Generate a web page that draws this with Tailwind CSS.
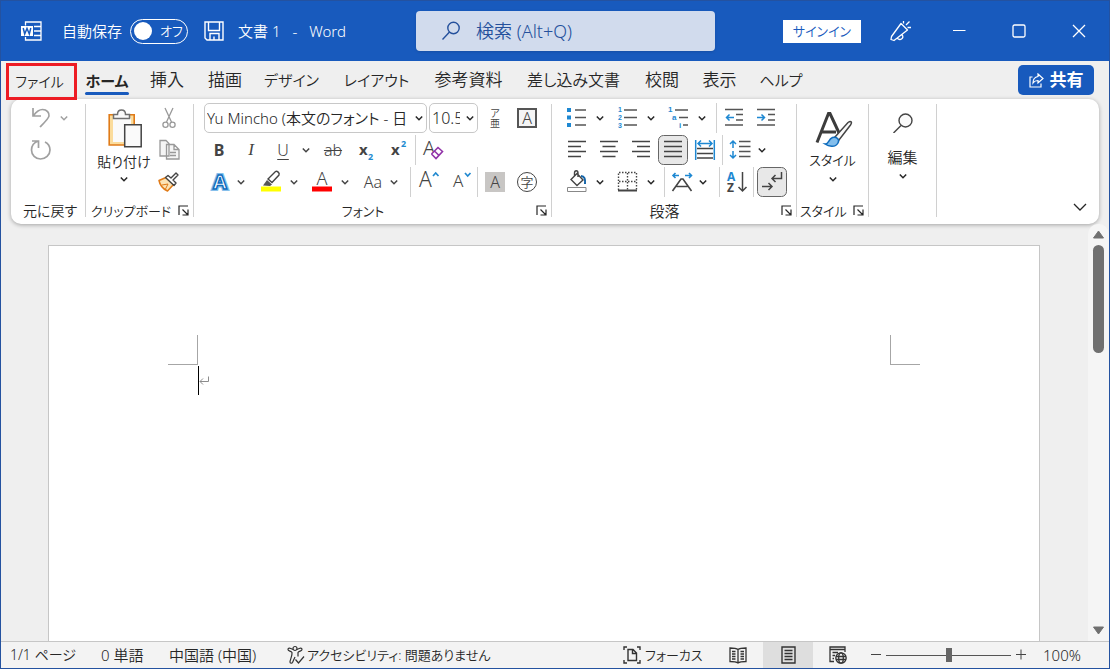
<!DOCTYPE html>
<html lang="ja">
<head>
<meta charset="utf-8">
<title>文書 1 - Word</title>
<script src="https://cdn.jsdelivr.net/npm/@tailwindcss/browser@4"></script>
</head>
<body class="flex h-screen flex-col overflow-hidden border border-[#2452a0] bg-[#efefef] font-['Noto_Sans','Noto_Sans_CJK_JP',sans-serif] text-[15px] leading-5 font-[350] text-[#262626] [font-feature-settings:'palt']">
<svg class="hidden">
  <symbol id="chev" viewBox="0 0 14 14"><path d="M3.800 5.500 7 8.700l3.200-3.200" fill="none" stroke="currentColor" stroke-width="1.500"/></symbol>
  <symbol id="launch" viewBox="0 0 12 12"><path d="M1 10V1h9M4.500 4.500l5 5M10 4.500V10H4.500" fill="none" stroke="currentColor" stroke-width="1.200"/></symbol>
</svg>

<!-- Title bar -->
<header class="flex h-[60px] shrink-0 items-center bg-[#185abd] text-white">
  <div class="flex w-[415px] shrink-0 items-center pl-5">
    <svg class="h-5 w-[21px]" viewBox="0 0 21 20" fill="none" stroke="#fff" stroke-width="1.300"><path d="M4.500 4.500V1h15.500v18H4.500v-3M13 5.500h7M13 10h7M13 14.500h7"/><path d="M0 5h12v10H0z" fill="#fff" stroke="none"/><path d="m2.200 7 1.500 6L6 7.500 8.300 13l1.500-6" stroke="#185abd" stroke-width="1.500"/></svg>
    <span class="ml-5 w-[60px] whitespace-nowrap" id="autosave">自動保存</span>
    <button role="switch" aria-checked="false" aria-labelledby="autosave" class="ml-2 flex h-[25px] w-[58px] items-center rounded-full border border-white pl-[3px]"><span class="size-[18px] rounded-full bg-white"></span><span class="ml-2 text-[13px]">オフ</span></button>
    <button aria-label="上書き保存" class="ml-4"><svg class="size-5" viewBox="0 0 20 20" fill="none" stroke="#fff" stroke-width="1.400"><path d="M1 1h18v18H3l-2-2zM4.500 1v8.500h11V1M6 19v-6.500h9V19M10 15.500V19"/></svg></button>
    <h1 class="ml-3.5 flex gap-3 whitespace-nowrap"><span>文書 1</span><span>-</span><span>Word</span></h1>
  </div>
  <label class="flex h-10 max-w-[299px] flex-1 items-center rounded-[4px] bg-[#d1dbed] pl-[26px] shadow">
    <svg class="size-5 shrink-0" viewBox="0 0 20 20" fill="none" stroke="#24509c" stroke-width="1.400"><circle cx="11.500" cy="7" r="5.700"/><path d="m7.500 11-7 7.500"/></svg>
    <input type="search" aria-label="検索" placeholder="検索 (Alt+Q)" class="ml-3.5 min-w-0 flex-1 bg-transparent text-[18px] outline-none placeholder:text-[#24509c]">
  </label>
  <div class="ml-auto flex items-center">
    <button class="h-[23px] w-[78px] bg-white text-[13px] leading-5 whitespace-nowrap text-[#185abd]">サインイン</button>
    <button aria-label="近日公開の機能" class="ml-7"><svg class="size-[22px]" viewBox="0 0 22 22" fill="none" stroke="#fff" stroke-width="1.300" stroke-linejoin="round"><path d="m12 3.500 6.500 6.500L5 20.500l-3-1 .5-3zM8 17.500c1 2 3 2.500 4.500 1.500s1.500-3 .5-4.500M14.500 1v2.500M20.500 1.500 17 5M18.500 7.500H22"/></svg></button>
    <button aria-label="最小化" class="ml-[18px] flex h-[60px] w-[60px] items-center justify-center"><svg class="size-3.5" viewBox="0 0 14 14" stroke="#fff"><path d="M1 6.500h12.500"/></svg></button>
    <button aria-label="最大化" class="flex h-[60px] w-[60px] items-center justify-center"><svg class="size-3.5" viewBox="0 0 14 14" fill="none" stroke="#fff" stroke-width="1.300"><rect x="1" y="1" width="12" height="12" rx="1.500"/></svg></button>
    <button aria-label="閉じる" class="flex h-[60px] w-[60px] items-center justify-center"><svg class="size-3.5" viewBox="0 0 14 14" fill="none" stroke="#fff" stroke-width="1.300"><path d="m1 1 12 12M13 1 1 13"/></svg></button>
  </div>
</header>

<!-- Tabs -->
<nav class="flex h-[38px] shrink-0 pl-[5px] text-[17px] whitespace-nowrap">
  <button class="relative z-10 mt-0.5 flex h-[37px] w-[71px] shrink-0 items-center justify-center border-3 border-[#ed1c24] pr-1 text-sm">ファイル</button>
  <button class="flex w-[60px] shrink-0 flex-col items-center pt-2 text-[15px] font-bold"><span class="h-[23px] leading-6">ホーム</span><span class="h-[3px] w-11 rounded-full bg-[#185abd]"></span></button>
  <button class="w-[60px] shrink-0">挿入</button>
  <button class="w-[56px] shrink-0">描画</button>
  <button class="flex w-[77px] shrink-0 items-center justify-center text-[15px]">デザイン</button>
  <button class="flex w-[93px] shrink-0 items-center justify-center text-[15px]">レイアウト</button>
  <button class="w-[91px] shrink-0">参考資料</button>
  <button class="flex w-[119px] shrink-0 items-center justify-center text-base">差し込み文書</button>
  <button class="w-[58px] shrink-0">校閲</button>
  <button class="w-[57px] shrink-0">表示</button>
  <button class="w-[66px] shrink-0 text-[15px]">ヘルプ</button>
  <button class="mt-1 mr-[15px] ml-auto flex h-[30px] w-[76px] items-center justify-center gap-1.5 rounded-[5px] bg-[#185abd] font-bold text-white"><svg class="size-[15px]" viewBox="0 0 15 15" fill="none" stroke="#fff" stroke-width="1.200"><path d="M3.500 4H1v10h11V10.500M9 1l5 4.500L9 10V7.500C6.500 7.500 5 8.500 4 10c0-4 2-6 5-6.500z"/></svg>共有</button>
</nav>

<!-- Ribbon -->
<section aria-label="リボン" class="mr-[10px] ml-[10px] flex shrink-0 rounded-[10px] bg-white shadow-[0_1px_4px_rgba(0,0,0,0.32)]">
  <div class="flex w-[74px] shrink-0 flex-col pt-[3px]">
    <div class="flex h-24 flex-col pl-3.5 text-[#a0a0a0]">
      <div class="flex items-center"><button aria-label="元に戻す"><svg class="size-8" viewBox="0 0 32 32" fill="none" stroke="currentColor" stroke-width="1.700"><path d="M8 6v8h8M8.500 13.500c3-4 6-6 9-6 4.500 0 7 3.500 6.500 6.500-.3 2.500-4 6-9 11"/></svg></button><button aria-label="元に戻す一覧"><svg class="size-3.5"><use href="#chev"/></svg></button></div>
      <button aria-label="やり直し" class="self-start"><svg class="size-8" viewBox="0 0 32 32" fill="none" stroke="currentColor" stroke-width="1.700"><path d="M7 7h6.500v7M13.500 7C9 8.500 6.500 12 6.500 16c0 5 4 9 9 9s9.500-4 9.500-9c0-3.500-2-6.500-5-8"/></svg></button>
    </div>
    <div class="flex h-[26px] items-center justify-center pl-1 text-sm whitespace-nowrap">元に戻す</div>
  </div>
  <div class="mt-[5px] mb-[7px] w-px bg-[#d0d0d0]"></div>

  <div class="flex w-[107px] shrink-0 flex-col pt-[3px]">
    <div class="flex h-24">
      <button class="ml-[9px] flex w-[58px] flex-col items-center pt-1.5"><svg class="h-10 w-9" viewBox="0 0 36 40" fill="none"><path d="M3.200 6.800h25V37h-25z" fill="#fbdc9c" stroke="#e07b18" stroke-width="1.600"/><path d="M7 10h18v24H7z" fill="#fafafa"/><path d="M7.500 10.500V6.500h4C11.500 4 13 2 15.500 2s4 2 4 4.500h4v4z" fill="#fafafa" stroke="#707070" stroke-width="1.500"/><path d="M18.700 16.700h16.500v22H18.700z" fill="#fafafa" stroke="#444" stroke-width="1.500"/></svg><span class="mt-1 text-sm leading-5 whitespace-nowrap">貼り付け</span><svg class="size-3.5 shrink-0"><use href="#chev"/></svg></button>
      <div class="flex w-8 flex-col">
        <button aria-label="切り取り"><svg class="size-8" viewBox="0 0 32 32" fill="none" stroke="#999" stroke-width="1.300"><path d="m12 6 6.500 14M20 6l-6.500 14"/><circle cx="12.500" cy="22.700" r="2.600"/><circle cx="19.500" cy="22.700" r="2.600"/></svg></button>
        <button aria-label="コピー"><svg class="size-8" viewBox="0 0 32 32" fill="#f5f5f5" stroke="#999" stroke-width="1.300"><path d="M7 6.500h6l3 3V22H7zM13.500 10.500h7.500l5 5V25H13.500zM21 10.500v5h5M17 18.500h6M17 21.500h6"/></svg></button>
        <button aria-label="書式のコピー/貼り付け"><svg class="size-8" viewBox="0 0 32 32" fill="none" stroke-linejoin="round"><path d="m13 11.500-7 3c1 5 4 8.500 8.500 10.500l6-6.500z" fill="#fce3b4" stroke="#e07b18" stroke-width="1.500"/><path d="m9 19 6-1-2.500 5" stroke="#e07b18"/><path d="m12.500 11.500 2.500-2 3 2.500 5-5 2 2-5 5 3 3-2 2.500z" fill="#fff" stroke="#444" stroke-width="1.400"/></svg></button>
      </div>
    </div>
    <div class="flex h-[26px] items-center justify-between pr-[3px] pl-[5px] text-[13px] whitespace-nowrap"><span>クリップボード</span><button aria-label="クリップボード 詳細"><svg class="size-3"><use href="#launch"/></svg></button></div>
  </div>
  <div class="mt-[5px] mb-[7px] w-px bg-[#d0d0d0]"></div>

  <!-- Font group -->
  <div class="flex w-[357px] shrink-0 flex-col pt-[3px]">
    <div class="flex h-8 items-center gap-0.5 pl-[10px]">
      <div class="flex h-[30px] w-[223px] items-center rounded-[5px] border border-[#c8c8c8]"><input aria-label="フォント" value="Yu Mincho (本文のフォント - 日" class="ml-0.5 w-[202px] min-w-0 bg-transparent text-[15px] outline-none"><button aria-label="フォント一覧" class="ml-auto"><svg class="size-3.5"><use href="#chev"/></svg></button></div>
      <div class="flex h-[30px] w-[49px] items-center rounded-[5px] border border-[#c8c8c8]"><input aria-label="フォント サイズ" value="10.5" class="ml-0.5 w-7 min-w-0 bg-transparent text-base outline-none"><button aria-label="サイズ一覧" class="ml-auto"><svg class="size-3.5"><use href="#chev"/></svg></button></div>
      <div class="-ml-px flex">
        <button aria-label="ルビ" class="flex w-8 flex-col items-center justify-center text-[10px] leading-[10px] text-[#444]"><span>ア</span><span>亜</span></button>
        <button aria-label="囲み線" class="flex w-8 justify-center"><span class="flex size-5 items-center justify-center border-2 border-[#555] bg-[#f5f5f5] text-base text-[#444]">A</span></button>
      </div>
    </div>
    <div class="flex h-8 items-center pl-[9px] text-[#444]">
      <button class="w-8 text-base font-bold">B</button>
      <button class="w-8 font-['Liberation_Serif',serif] text-[17px] italic">I</button>
      <button class="w-8 text-base underline underline-offset-3">U</button>
      <button aria-label="下線の種類" class="w-3.5"><svg class="size-3.5"><use href="#chev"/></svg></button>
      <button class="ml-1 w-8 text-base line-through">ab</button>
      <button aria-label="下付き" class="w-8"><svg class="size-8" viewBox="0 0 32 32"><text x="10" y="21" font-size="15" font-weight="bold" fill="#444">x</text><text x="19" y="26" font-size="9" font-weight="bold" fill="#2189d0">2</text></svg></button>
      <button aria-label="上付き" class="w-8"><svg class="size-8" viewBox="0 0 32 32"><text x="10" y="21" font-size="15" font-weight="bold" fill="#444">x</text><text x="20" y="13" font-size="9" font-weight="bold" fill="#2189d0">2</text></svg></button>
      <div class="ml-0.5 h-[30px] w-px bg-[#d0d0d0]"></div>
      <button aria-label="書式のクリア"><svg class="size-8" viewBox="0 0 32 32"><text x="7" y="21" font-size="20" fill="#444">A</text><path d="m15.500 20 6.500-6.500 4.500 4-6.500 7-4.500-4.500m3-3 4.500 4.500" fill="#fff" stroke="#9133a8" stroke-width="1.600"/></svg></button>
    </div>
    <div class="flex h-8 items-center pl-[10px] text-[#444]">
      <div class="mr-[5px] flex items-center"><button aria-label="文字の効果"><svg class="size-8" viewBox="0 0 32 32"><text x="16" y="23" text-anchor="middle" font-size="20" font-weight="bold" fill="#fff" stroke="#86bfeb" stroke-width="4" paint-order="stroke">A</text><text x="16" y="23" text-anchor="middle" font-size="20" font-weight="bold" fill="#fff" stroke="#0f6cbd" stroke-width="1.500">A</text></svg></button><button aria-label="効果一覧" class="-ml-0.5 mr-0.5"><svg class="size-3.5"><use href="#chev"/></svg></button></div>
      <div class="mr-[5px] flex items-center"><button aria-label="蛍光ペン"><svg class="size-8" viewBox="0 0 32 32"><path d="M6 20.500h20v5H6z" fill="#ff0"/><path d="M8 19.500 12 14l5 4.500-2 1.500z" fill="#555"/><path d="m13 13 7.500-7.500c1.500-1 4.500 1.500 3.500 3.500L17 16.500z" fill="#fff" stroke="#444" stroke-width="1.400"/></svg></button><button aria-label="蛍光ペンの色"><svg class="size-3.5"><use href="#chev"/></svg></button></div>
      <div class="mr-[5px] flex items-center"><button aria-label="フォントの色"><svg class="size-8" viewBox="0 0 32 32"><text x="16" y="19" text-anchor="middle" font-size="18" fill="#444">A</text><path d="M6 20.500h20v5H6z" fill="red"/></svg></button><button aria-label="色一覧"><svg class="size-3.5"><use href="#chev"/></svg></button></div>
      <div class="flex items-center"><button class="w-8 text-base">Aa</button><button aria-label="文字種の変換" class="-ml-0.5 mr-px"><svg class="size-3.5"><use href="#chev"/></svg></button></div>
      <div class="mr-0.5 ml-2 h-[30px] w-px bg-[#d0d0d0]"></div>
      <button aria-label="フォント サイズの拡大"><svg class="size-8" viewBox="0 0 32 32"><text x="6" y="21" font-size="21" fill="#444">A</text><path d="m20 10 2.700-3 2.800 3" fill="none" stroke="#2189d0" stroke-width="1.700"/></svg></button>
      <button aria-label="フォント サイズの縮小"><svg class="size-8" viewBox="0 0 32 32"><text x="8" y="21" font-size="17" fill="#444">A</text><path d="m20 7 2.700 3 2.800-3" fill="none" stroke="#2189d0" stroke-width="1.700"/></svg></button>
      <div class="mr-px h-[30px] w-px bg-[#d0d0d0]"></div>
      <button aria-label="文字の網かけ" class="flex w-8 justify-center"><span class="flex size-5 items-center justify-center bg-[#c8c6c4] text-base">A</span></button>
      <button aria-label="囲い文字" class="flex w-8 justify-center"><span class="flex size-5 items-center justify-center rounded-full border border-[#444] text-[13px]">字</span></button>
    </div>
    <div class="grid h-[26px] grid-cols-[1fr_auto_1fr] items-center pr-[3px] text-[13px]"><span></span><span class="pr-4">フォント</span><button aria-label="フォント 詳細" class="justify-self-end"><svg class="size-3"><use href="#launch"/></svg></button></div>
  </div>
  <div class="mt-[5px] mb-[7px] w-px bg-[#d0d0d0]"></div>

  <!-- Paragraph group -->
  <div class="flex w-[244px] shrink-0 flex-col pt-[3px]">
    <div class="flex h-8 items-center pl-[9px]">
      <div class="mr-[5px] flex items-center"><button aria-label="箇条書き"><svg class="size-8" viewBox="0 0 32 32"><path d="M6 6h4v4H6zM6 13.500h4v4H6zM6 21h4v4H6z" fill="#1e88d2"/><path d="M14 8h11M14 15.500h11M14 23h11" stroke="#555" stroke-width="1.500"/></svg></button><button aria-label="行頭文字"><svg class="size-3.5"><use href="#chev"/></svg></button></div>
      <div class="mr-[5px] flex items-center"><button aria-label="段落番号"><svg class="size-8 font-['Liberation_Sans',sans-serif]" viewBox="0 0 32 32"><g font-size="7" font-weight="bold" fill="#1e88d2"><text x="6" y="10">1</text><text x="6" y="18">2</text><text x="6" y="26">3</text></g><path d="M12 8h13M12 15.500h13M12 23h13" stroke="#555" stroke-width="1.500"/></svg></button><button aria-label="番号書式"><svg class="size-3.5"><use href="#chev"/></svg></button></div>
      <div class="flex items-center"><button aria-label="アウトライン"><svg class="size-8 font-['Liberation_Sans',sans-serif]" viewBox="0 0 32 32"><g font-size="8" font-weight="bold" fill="#1e88d2"><text x="5" y="10">1</text><text x="9" y="18">a</text><text x="16" y="26">i</text></g><path d="M12 8h13M16 15.500h9M20 23h5" stroke="#555" stroke-width="1.500"/></svg></button><button aria-label="リスト一覧"><svg class="size-3.5"><use href="#chev"/></svg></button></div>
      <div class="mr-px ml-[7px] h-[30px] w-px bg-[#d0d0d0]"></div>
      <button aria-label="インデントを減らす"><svg class="size-8" viewBox="0 0 32 32" fill="none" stroke-width="1.500"><path d="M7 7.500h18M18 12.500h7M18 18h7M7 23h18" stroke="#555"/><path d="M16 15.500H8.500M11.500 12.500l-3 3 3 3" stroke="#1e88d2"/></svg></button>
      <button aria-label="インデントを増やす"><svg class="size-8" viewBox="0 0 32 32" fill="none" stroke-width="1.500"><path d="M7 7.500h18M18 12.500h7M18 18h7M7 23h18" stroke="#555"/><path d="M7 15.500h7.500M11.500 12.500l3 3-3 3" stroke="#1e88d2"/></svg></button>
    </div>
    <div class="flex h-8 items-center pl-[9px]">
      <button aria-label="左揃え"><svg class="size-8" viewBox="0 0 32 32"><path d="M7 7.500h18M7 12.500h13M7 17.500h18M7 22.500h13" stroke="#444" stroke-width="1.500"/></svg></button>
      <button aria-label="中央揃え"><svg class="size-8" viewBox="0 0 32 32"><path d="M7 7.500h18M9.500 12.500h13M7 17.500h18M9.500 22.500h13" stroke="#444" stroke-width="1.500"/></svg></button>
      <button aria-label="右揃え"><svg class="size-8" viewBox="0 0 32 32"><path d="M7 7.500h18M12 12.500h13M7 17.500h18M12 22.500h13" stroke="#444" stroke-width="1.500"/></svg></button>
      <button aria-label="両端揃え" aria-pressed="true"><svg class="size-8" viewBox="0 0 32 32"><rect x="1.500" y="1.500" width="29" height="29" rx="5" fill="#e8e8e8" stroke="#666"/><path d="M7 7.500h18M7 12.500h18M7 17.500h18M7 22.500h18" stroke="#444" stroke-width="1.500"/></svg></button>
      <button aria-label="均等割り付け"><svg class="size-8" viewBox="0 0 32 32" fill="none" stroke-width="1.500"><path d="M8 14.500h16M8 19.500h16M8 24h16" stroke="#444"/><path d="M6.700 6v20M25.300 6v20M9 9.500h14M12 6.500l-3 3 3 3M20 6.500l3 3-3 3" stroke="#1e88d2"/></svg></button>
      <div class="ml-px h-[30px] w-px bg-[#d0d0d0]"></div>
      <button aria-label="行と段落の間隔"><svg class="size-8" viewBox="0 0 32 32" fill="none" stroke-width="1.500"><path d="M16 7.500h11.500M16 12.500h11.500M16 17.500h11.500M16 22.500h11.500" stroke="#555"/><path d="M10 7v7M7 10l3-3 3 3M10 17v7M7 21l3 3 3-3" stroke="#1e88d2"/></svg></button><button aria-label="間隔一覧"><svg class="size-3.5"><use href="#chev"/></svg></button>
    </div>
    <div class="flex h-8 items-center pl-[9px]">
      <div class="mr-[5px] flex items-center"><button aria-label="塗りつぶし"><svg class="size-8" viewBox="0 0 32 32" fill="none"><path d="M6.500 21.500h18.500v4H6.500z" stroke="#888"/><path d="m10 13.500 6-6 6 6.500-6 5.500zM13.500 10V7c0-3 3.500-3 3.500 0v4" stroke="#444" stroke-width="1.400"/><path d="M20 10c3.500 0 4.500 3 4 8" stroke="#1464a8" stroke-width="2"/></svg></button><button aria-label="塗りつぶしの色"><svg class="size-3.5"><use href="#chev"/></svg></button></div>
      <div class="flex items-center"><button aria-label="罫線"><svg class="size-8" viewBox="0 0 32 32" fill="none" stroke="#444" stroke-width="1.400"><path d="M6.500 24V6.500h18V24M15.500 7v17M7 15.500h18" stroke-dasharray="1.500 1.500"/><path d="M6 24.500h19" stroke-width="2"/></svg></button><button aria-label="罫線一覧"><svg class="size-3.5"><use href="#chev"/></svg></button></div>
      <div class="mr-px ml-1.5 h-[30px] w-px bg-[#d0d0d0]"></div>
      <button aria-label="拡張書式"><svg class="size-8" viewBox="0 0 32 32" fill="none" stroke-width="1.600"><path d="m6.500 25 8.500-12h2l8.500 12M10.500 20.500h11" stroke="#444"/><path d="M13 9.500H7M9.500 7 7 9.500 9.500 12M19 9.500h6.500M23 7l2.500 2.500L23 12" stroke="#1e88d2"/></svg></button><button aria-label="書式一覧" class="-ml-0.5 mr-0.5"><svg class="size-3.5"><use href="#chev"/></svg></button>
      <div class="mr-px ml-[7px] h-[30px] w-px bg-[#d0d0d0]"></div>
      <button aria-label="並べ替え"><svg class="size-8" viewBox="0 0 32 32" fill="none"><text x="6" y="15" font-size="12" font-weight="bold" fill="#1e88d2">A</text><text x="6" y="26" font-size="12" font-weight="bold" fill="#444">Z</text><path d="M21.500 6v19M17.500 21l4 4 4-4" stroke="#444" stroke-width="1.500"/></svg></button>
      <div class="mr-0.5 h-[30px] w-px bg-[#d0d0d0]"></div>
      <button aria-label="編集記号の表示" aria-pressed="true"><svg class="size-8" viewBox="0 0 32 32" fill="none" stroke="#444" stroke-width="1.500"><rect x="1.500" y="1.500" width="29" height="29" rx="5" fill="#e8e8e8" stroke="#666" stroke-width="1"/><path d="M25.500 6v6.500H16M19.500 9 16 12.500l3.500 3.500M6 20.500h10M12.500 17l3.500 3.500-3.500 3.500"/></svg></button>
    </div>
    <div class="grid h-[26px] grid-cols-[1fr_auto_1fr] items-center pr-[3px]"><span></span><span class="pr-4">段落</span><button aria-label="段落 詳細" class="justify-self-end"><svg class="size-3"><use href="#launch"/></svg></button></div>
  </div>
  <div class="mt-[5px] mb-[7px] w-px bg-[#d0d0d0]"></div>

  <div class="flex w-[71px] shrink-0 flex-col pt-[3px]">
    <button class="flex h-24 flex-col items-center pt-2"><svg class="h-10 w-11" viewBox="0 0 44 40" fill="none"><path d="m6 32.500 11.500-29h1.500L29 25M11 22h14" stroke="#3c3c3c" stroke-width="3"/><path d="M24 27 37 12.500c3-2 4.500-.5 2.500 2.500L28 30z" fill="#fafafa" stroke="#444" stroke-width="1.500"/><path d="M14 34c4 .5 3-4.500 7.500-6.500 4-1 7.500 2 5.500 5.500-2.500 4.500-9 4-13 1z" fill="#83beec" stroke="#0f6cbd" stroke-width="1.500"/></svg><span class="text-[13px] leading-5">スタイル</span><svg class="mt-0.5 size-3.5 shrink-0"><use href="#chev"/></svg></button>
    <div class="flex h-[26px] items-center justify-between pr-[3px] pl-[3px] text-[13px] whitespace-nowrap"><span>スタイル</span><button aria-label="スタイル 詳細"><svg class="size-3"><use href="#launch"/></svg></button></div>
  </div>
  <div class="mt-[5px] mb-[7px] w-px bg-[#d0d0d0]"></div>
  <button class="flex w-[67px] shrink-0 flex-col items-center pt-3.5"><svg class="size-5" viewBox="0 0 20 20" fill="none" stroke="#444" stroke-width="1.400"><circle cx="12.500" cy="7.500" r="6.500" fill="#fafafa"/><path d="M8 12.500.5 20"/></svg><span class="mt-3.5">編集</span><svg class="mt-0.5 size-3.5"><use href="#chev"/></svg></button>
  <div class="mt-[5px] mb-[7px] w-px bg-[#d0d0d0]"></div>
  <button aria-label="リボンを折りたたむ" class="mr-3 mb-3 ml-auto self-end"><svg class="h-2.5 w-3.5" viewBox="0 0 14 10" fill="none" stroke="#262626" stroke-width="1.300"><path d="m1 2 6 6 6-6"/></svg></button>
</section>

<!-- Document -->
<main class="flex min-h-0 flex-1">
  <div class="mt-[21px] mr-12 ml-[47px] flex-1 border border-b-0 border-[#c6c6c6] bg-white px-[119px] pt-[89px]">
    <div class="flex justify-between"><span class="size-[30px] border-r border-b border-[#a6a6a6]"></span><span class="size-[30px] border-b border-l border-[#a6a6a6]"></span></div>
    <p class="mt-px ml-[30px] flex items-center"><span class="h-[29px] w-px bg-black"></span><svg class="h-2.5 w-2.5" viewBox="0 0 10 10" fill="none" stroke="#8c8c8c"><path d="M9.500.5v5H1M4 2.500l-3 3 3 3"/></svg></p>
  </div>
  <div class="flex w-[21px] flex-col items-center rounded-t-[10px] bg-[#f5f5f5] pt-1.5 pb-1.5">
    <svg class="h-[9px] w-[11px]" viewBox="0 0 11 9"><path d="M5.500 1 10.500 8H.5z" fill="#707070" stroke="#707070" stroke-linejoin="round"/></svg>
    <div class="mt-1.5 h-[108px] w-[11px] rounded-full bg-[#707070]"></div>
    <svg class="mt-auto h-[9px] w-[11px]" viewBox="0 0 11 9"><path d="M5.500 8 10.500 1H.5z" fill="#707070" stroke="#707070" stroke-linejoin="round"/></svg>
  </div>
</main>

<!-- Status bar -->
<footer class="flex h-[27px] shrink-0 items-center border-t border-[#c6c6c6] bg-[#f3f3f3] pl-[9px] text-[15px] whitespace-nowrap">
  <span class="w-[91px] text-sm">1/1 ページ</span>
  <span class="w-[68px]">0 単語</span>
  <span class="w-[118px]">中国語 (中国)</span>
  <button class="flex items-center gap-0.5 text-[13px]"><svg class="h-5 w-[18px]" viewBox="0 0 18 20" fill="none" stroke="#333" stroke-width="1.200"><circle cx="8" cy="3.500" r="2"/><path d="M6 4.500C3 3 1 2.500 1 4.500c0 1.500 3 1.500 4 3 .5 3-2 7.500-2 9.500 0 1.500 2 1.500 2.500.5L8 12M10 4.500c3-1.500 5-2 5 0 0 1.500-3 1.500-4 3v4M8.500 14.500 11.500 18 17 11.500"/></svg>アクセシビリティ: 問題ありません</button>
  <button class="ml-auto flex w-[90px] items-center gap-1 text-[13px]"><svg class="h-[18px] w-[18px] shrink-0" viewBox="0 0 18 18" fill="none" stroke="#333" stroke-width="1.400"><path d="M4 1H1v3M14 1h3v3M4 17H1v-3M14 17h3v-3M5 3.500h5l3.500 3.500v7.500H5zM9.500 3.500V7.500h4"/></svg>フォーカス</button>
  <button aria-label="閲覧モード" class="flex h-[26px] w-[50px] items-center justify-center"><svg class="h-[17px] w-[18px]" viewBox="0 0 18 17" fill="none" stroke="#333" stroke-width="1.300"><path d="M9 2.500C7 1 4 1 1 1v13.500c3 0 6 0 8 1.500 2-1.500 5-1.500 8-1.500V1c-3 0-6 0-8 1.500zM9 2.500V16M3 4.500h3.500M3 7h3.500M3 9.500h3.500M3 12h3.500M11.500 4.500H15M11.500 7H15M11.500 9.500H15M11.500 12H15"/></svg></button>
  <button aria-label="印刷レイアウト" aria-pressed="true" class="flex h-[26px] w-[50px] items-center justify-center bg-[#dedede]"><svg class="h-[18px] w-[15px]" viewBox="0 0 15 18" fill="none" stroke="#333" stroke-width="1.400"><path d="M1 1h13v16H1zM3.500 4.500h8M3.500 7.500h8M3.500 10.500h8M3.500 13.500h8"/></svg></button>
  <button aria-label="Web レイアウト" class="flex h-[26px] w-[50px] items-center justify-center"><svg class="h-[18px] w-[18px]" viewBox="0 0 18 18" fill="none" stroke="#333" stroke-width="1.300"><path d="M5 15.500H1V1h15v5M1 3.500h15M3.500 6.500H9M3.500 9.500H6M3.500 12.500H5"/><circle cx="12" cy="12" r="5.200"/><ellipse cx="12" cy="12" rx="2.300" ry="5.200"/><path d="M7 10.500h10M7 13.500h10"/></svg></button>
  <button aria-label="縮小" class="ml-[7px]"><svg class="size-3" viewBox="0 0 12 12" stroke="#444"><path d="M1 5.500h10"/></svg></button>
  <div class="ml-1 flex w-[125px] items-center"><input type="range" min="0" max="100" value="50" aria-label="ズーム" class="h-4 w-full appearance-none bg-[linear-gradient(#555,#555)] bg-[length:100%_1px] bg-center bg-no-repeat [&::-webkit-slider-thumb]:h-3.5 [&::-webkit-slider-thumb]:w-1.5 [&::-webkit-slider-thumb]:appearance-none [&::-webkit-slider-thumb]:bg-[#666]"></div>
  <button aria-label="拡大" class="ml-1"><svg class="size-3" viewBox="0 0 12 12" stroke="#444"><path d="M1 5.500h10M6 .5v10"/></svg></button>
  <button class="mr-6 ml-4 w-[42px] text-left">100%</button>
</footer>
</body>
</html>
